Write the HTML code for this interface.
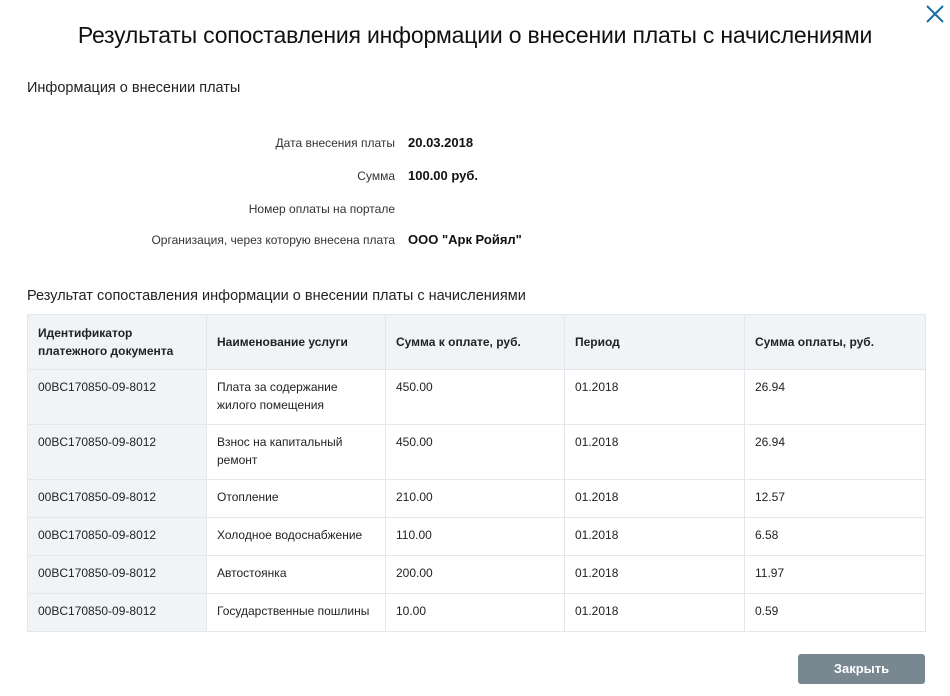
<!DOCTYPE html>
<html><head><meta charset="utf-8"><style>
body{margin:0;width:950px;height:696px;background:#fff;font-family:"Liberation Sans",Arial,sans-serif;color:#222;position:relative;overflow:hidden}
.t{position:absolute;left:0;width:950px;top:22px;text-align:center;font-size:23px;color:#111;letter-spacing:-0.2px}
.h{position:absolute;left:27px;font-size:14.5px;color:#222}
.lab{position:absolute;right:555px;font-size:12px;color:#333;text-align:right}
.val{position:absolute;left:408px;font-size:13px;font-weight:bold;color:#111}
table{position:absolute;left:27px;top:314px;width:898px;border-collapse:collapse;font-size:12px;table-layout:fixed}
td,th{border:1px solid #e3e7eb;padding:0 10px;vertical-align:top;text-align:left;line-height:18px}
th{background:#f1f4f7;font-weight:bold;height:54px;vertical-align:middle;color:#222}
td{padding-top:8px;color:#222}
td:first-child{background:#f1f4f7}
tr.s td{height:29px}
tr.d td{height:46px}
.btn{position:absolute;left:798px;top:654px;width:127px;height:30px;background:#798791;border-radius:3px;color:#fff;font-size:13px;font-weight:bold;text-align:center;line-height:30px}
</style></head><body>
<svg style="position:absolute;left:926px;top:5px" width="18" height="18"><path d="M1 1L17 17M17 1L1 17" stroke="#1a6fa5" stroke-width="2"/></svg>
<div class="t">Результаты сопоставления информации о внесении платы с начислениями</div>
<div class="h" style="top:80px">Информация о внесении платы</div>
<div class="lab" style="top:136px">Дата внесения платы</div><div class="val" style="top:135px">20.03.2018</div>
<div class="lab" style="top:169px">Сумма</div><div class="val" style="top:168px">100.00 руб.</div>
<div class="lab" style="top:202px">Номер оплаты на портале</div>
<div class="lab" style="top:233px">Организация, через которую внесена плата</div><div class="val" style="top:232px">ООО "Арк Ройял"</div>
<div class="h" style="top:288px">Результат сопоставления информации о внесении платы с начислениями</div>
<table>
<colgroup><col style="width:179px"><col style="width:179px"><col style="width:179px"><col style="width:180px"><col style="width:181px"></colgroup>
<tr><th>Идентификатор платежного документа</th><th>Наименование услуги</th><th>Сумма к оплате, руб.</th><th>Период</th><th>Сумма оплаты, руб.</th></tr>
<tr class="d"><td>00BC170850-09-8012</td><td>Плата за содержание жилого помещения</td><td>450.00</td><td>01.2018</td><td>26.94</td></tr>
<tr class="d"><td>00BC170850-09-8012</td><td>Взнос на капитальный ремонт</td><td>450.00</td><td>01.2018</td><td>26.94</td></tr>
<tr class="s"><td>00BC170850-09-8012</td><td>Отопление</td><td>210.00</td><td>01.2018</td><td>12.57</td></tr>
<tr class="s"><td>00BC170850-09-8012</td><td>Холодное водоснабжение</td><td>110.00</td><td>01.2018</td><td>6.58</td></tr>
<tr class="s"><td>00BC170850-09-8012</td><td>Автостоянка</td><td>200.00</td><td>01.2018</td><td>11.97</td></tr>
<tr class="s"><td>00BC170850-09-8012</td><td style="white-space:nowrap">Государственные пошлины</td><td>10.00</td><td>01.2018</td><td>0.59</td></tr>
</table>
<div class="btn">Закрыть</div>
</body></html>
